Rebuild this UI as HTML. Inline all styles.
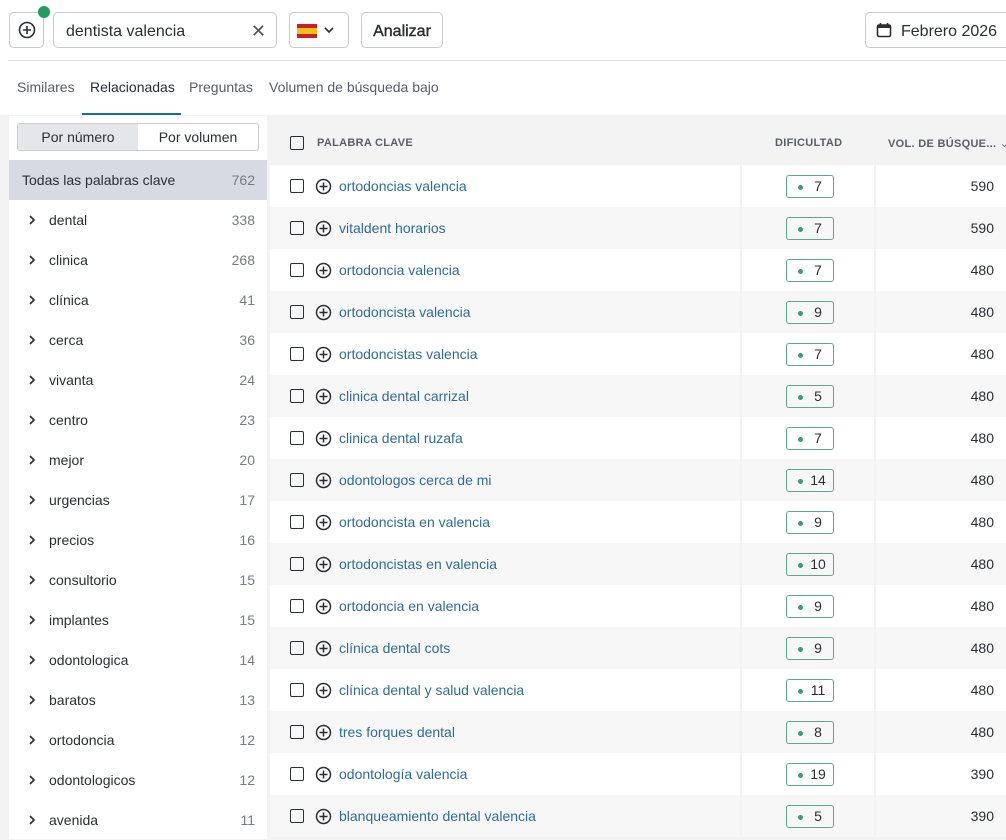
<!DOCTYPE html><html><head><meta charset="utf-8"><style>
*{box-sizing:border-box;margin:0;padding:0}
body{width:1006px;height:839px;overflow:hidden;background:#f3f3f4;font-family:"Liberation Sans",sans-serif;color:#2b2e33;position:relative}
.top{position:absolute;left:0;top:0;width:1006px;height:115px;background:#fff}
.hr{position:absolute;left:8px;right:0;top:60px;height:1px;background:#dcdde0}
.btn{position:absolute;border:1px solid #c9cbcf;border-radius:5px;background:#fff}
.tab{position:absolute;top:79px;font-size:14px;color:#5a5e66}
.side{position:absolute;left:9px;top:116px;width:258px;height:723px;background:#fff}
.tog{position:absolute;left:8px;top:7px;width:242px;height:28px;border:1px solid #c9cbcf;border-radius:3px;display:flex;font-size:14px}
.tog div{flex:1;text-align:center;line-height:26px}
.it{position:absolute;left:0;width:258px;height:40px;font-size:14px;line-height:40px}
.it .n{position:absolute;right:12px;color:#777b82}
.it .t{position:absolute;left:40px}
.it svg{position:absolute;left:19px;top:15px}
.tbl{position:absolute;left:270px;top:120px;width:736px}
.row{position:absolute;left:0;width:736px;height:42px;font-size:14px}
.cb{position:absolute;left:20px;top:14px;width:14px;height:14px;border:1.6px solid #2b2e33;border-radius:2px}
.pl{position:absolute;left:45px;top:13px}
.kw{position:absolute;left:69px;top:13px;color:#2f6d96}
.d{position:absolute;left:516px;top:10px;width:48px;height:23px;border:1px solid #5aa98c;border-radius:3px;font-size:14px;line-height:21px}
.d i{position:absolute;left:11px;top:9px;width:5px;height:5px;border-radius:50%;background:#3a9c76}
.d span{position:absolute;left:22px;width:18px;text-align:center}
.v{position:absolute;right:12px;top:13px}
.sep1{position:absolute;left:470px;top:0;width:2px;height:42px;background:#f3f3f4}
.sep2{position:absolute;left:604px;top:0;width:2px;height:42px;background:#f3f3f4}
.hd{position:absolute;top:17px;font-size:11px;font-weight:bold;color:#5a5e66;letter-spacing:.3px;white-space:nowrap}
</style></head><body>
<div class="top"></div>
<div class="btn" style="left:9px;top:12px;width:35px;height:36px"><svg width="35" height="34" viewBox="0 0 35 34"><circle cx="17" cy="17" r="7.5" fill="none" stroke="#2b2e33" stroke-width="1.6"/><path d="M17 13v8M13 17h8" stroke="#2b2e33" stroke-width="1.6"/></svg></div>
<div style="position:absolute;left:38px;top:6px;width:12px;height:12px;border-radius:50%;background:#1f9e5e"></div>
<div class="btn" style="left:53px;top:12px;width:224px;height:36px;font-size:16px;line-height:38px;padding-left:12px">dentista valencia<span style="position:absolute;right:10px;top:-1px;font-size:18px;color:#555">✕</span></div>
<div class="btn" style="left:289px;top:12px;width:60px;height:36px"><div style="position:absolute;left:7px;top:11px;width:20px;height:14px;background:#c8202a"><div style="position:absolute;left:0;top:4px;width:20px;height:6px;background:#f4c015"></div></div><svg style="position:absolute;left:34px;top:13px" width="10" height="8"><path d="M1 2l4 4 4-4" fill="none" stroke="#2b2e33" stroke-width="1.6"/></svg></div>
<div class="btn" style="left:361px;top:12px;width:82px;height:36px;font-size:16px;line-height:37px;text-align:center;color:#2b2e33;-webkit-text-stroke:0.4px #2b2e33">Analizar</div>
<div class="btn" style="left:865px;top:12px;width:150px;height:36px;font-size:16px;line-height:37px;padding-left:35px">Febrero 2026<svg style="position:absolute;left:10px;top:9px" width="16" height="16"><rect x="1.5" y="3" width="13" height="11.5" rx="1.5" fill="none" stroke="#2b2e33" stroke-width="1.6"/><rect x="1.5" y="3" width="13" height="3" fill="#2b2e33"/><path d="M4.5 1v3M11.5 1v3" stroke="#2b2e33" stroke-width="1.6"/></svg></div>
<div class="hr"></div>
<div class="tab" style="left:17px">Similares</div>
<div class="tab" style="left:90px;color:#2b2e33">Relacionadas</div>
<div class="tab" style="left:189px">Preguntas</div>
<div class="tab" style="left:269px">Volumen de búsqueda bajo</div>
<div style="position:absolute;left:82px;top:113px;width:99px;height:2px;background:#1c6f8f"></div>
<div class="side">
<div class="tog"><div style="background:#e4e6ea">Por número</div><div>Por volumen</div></div>
<div class="it" style="top:44px;background:#d7dae2"><span style="position:absolute;left:13px">Todas las palabras clave</span><span class="n">762</span></div>
</div>
<div class="tbl">
<div class="row" style="top:0;height:45px;background:#f3f3f4"><div class="cb" style="top:16px"></div><span class="hd" style="left:47px">PALABRA CLAVE</span><span class="hd" style="left:505px">DIFICULTAD</span><span class="hd" style="left:618px">VOL. DE BÚSQUE... <span style="font-weight:normal">⌄</span></span></div>
<div id="rows"></div>
</div>
<script>
var s=[["dental",338],["clinica",268],["clínica",41],["cerca",36],["vivanta",24],["centro",23],["mejor",20],["urgencias",17],["precios",16],["consultorio",15],["implantes",15],["odontologica",14],["baratos",13],["ortodoncia",12],["odontologicos",12],["avenida",11]];
var h="";s.forEach(function(x,i){h+='<div class="it" style="top:'+(84+i*40)+'px"><svg width="8" height="10"><path d="M2 1l4 4-4 4" fill="none" stroke="#2b2e33" stroke-width="1.6"/></svg><span class="t">'+x[0]+'</span><span class="n">'+x[1]+'</span></div>'});
document.querySelector('.side').innerHTML+=h;
var r=[["ortodoncias valencia",7,590],["vitaldent horarios",7,590],["ortodoncia valencia",7,480],["ortodoncista valencia",9,480],["ortodoncistas valencia",7,480],["clinica dental carrizal",5,480],["clinica dental ruzafa",7,480],["odontologos cerca de mi",14,480],["ortodoncista en valencia",9,480],["ortodoncistas en valencia",10,480],["ortodoncia en valencia",9,480],["clínica dental cots",9,480],["clínica dental y salud valencia",11,480],["tres forques dental",8,480],["odontología valencia",19,390],["blanqueamiento dental valencia",5,390]];
h="";r.forEach(function(x,i){h+='<div class="row" style="top:'+(45+i*42)+'px;background:'+(i%2?'#f7f7f8':'#fff')+'"><div class="sep1"></div><div class="sep2"></div><div class="cb"></div><svg class="pl" width="17" height="17"><circle cx="8.5" cy="8.5" r="7" fill="none" stroke="#2b2e33" stroke-width="1.5"/><path d="M8.5 4.5v8M4.5 8.5h8" stroke="#2b2e33" stroke-width="1.5"/></svg><span class="kw">'+x[0]+'</span><div class="d"><i></i><span>'+x[1]+'</span></div><span class="v">'+x[2]+'</span></div>'});
document.getElementById('rows').innerHTML=h;
</script>
</body></html>
